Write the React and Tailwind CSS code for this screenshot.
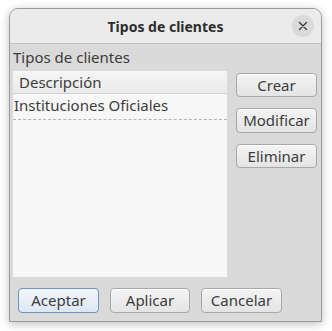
export default function App() {
  const font = { fontFamily: '"Noto Sans", "Open Sans", sans-serif' };
  const btn =
    "flex items-center justify-center rounded-[4px] border border-[#a8a8a8] bg-gradient-to-b from-[#f4f4f4] to-[#e4e4e4] text-[15px] text-[#3c3c3c] shadow-[inset_0_1px_0_#ffffff]";
  return (
    <div className="w-[332px] h-[331px] bg-white pt-[8px] pl-[9px]" style={font}>
      <div className="w-[313px] h-[314px] rounded-t-[9px] border border-[#9a9a9a] bg-[#dadada] shadow-[0_2px_10px_rgba(0,0,0,0.25)] flex flex-col overflow-hidden">
        <div className="relative h-[35px] shrink-0 bg-[#ebebeb] border-b border-[#c4c4c4] flex items-center justify-center">
          <span className="text-[14px] font-bold text-[#2e2e2e]">Tipos de clientes</span>
          <div className="absolute right-[7px] top-[6px] w-[22px] h-[22px] rounded-full bg-[#dadada] flex items-center justify-center">
            <svg width="10" height="10" viewBox="0 0 10 10">
              <path d="M1.5 1.5 L8.5 8.5 M8.5 1.5 L1.5 8.5" stroke="#3a3a3a" strokeWidth="1.4" strokeLinecap="round" />
            </svg>
          </div>
        </div>
        <div className="flex flex-col pl-[3px] pr-[4px]">
          <div className="h-[27px] pt-[3px] text-[15px] leading-[20px] text-[#3c3c3c]">Tipos de clientes</div>
          <div className="flex">
            <div className="w-[214px] h-[206px] bg-[#f7f7f7] flex flex-col">
              <div className="h-[23px] border-b border-[#d2d2d2] bg-gradient-to-b from-[#f6f6f6] to-[#e9e9e9] pl-[6px] text-[15px] leading-[22px] text-[#3c3c3c]">
                Descripción
              </div>
              <div className="h-[26px] border-b border-dashed border-[#b4b4b4] pl-[1px] text-[15px] leading-[22px] text-[#3c3c3c]">
                Instituciones Oficiales
              </div>
            </div>
            <div className="ml-[9px] pt-[2px] flex flex-col gap-[11px]">
              <div className={btn + " w-[81px] h-[24px]"}>Crear</div>
              <div className={btn + " w-[81px] h-[25px]"}>Modificar</div>
              <div className={btn + " w-[81px] h-[24px]"}>Eliminar</div>
            </div>
          </div>
          <div className="mt-[11px] pl-[5px] flex gap-[11px]">
            <div className="flex items-center justify-center w-[81px] h-[25px] rounded-[4px] border border-[#6f93c4] bg-gradient-to-b from-[#f2f6fb] to-[#dde7f3] text-[15px] text-[#3c3c3c]">
              Aceptar
            </div>
            <div className={btn + " w-[80px] h-[25px]"}>Aplicar</div>
            <div className={btn + " w-[81px] h-[25px]"}>Cancelar</div>
          </div>
        </div>
      </div>
    </div>
  );
}
